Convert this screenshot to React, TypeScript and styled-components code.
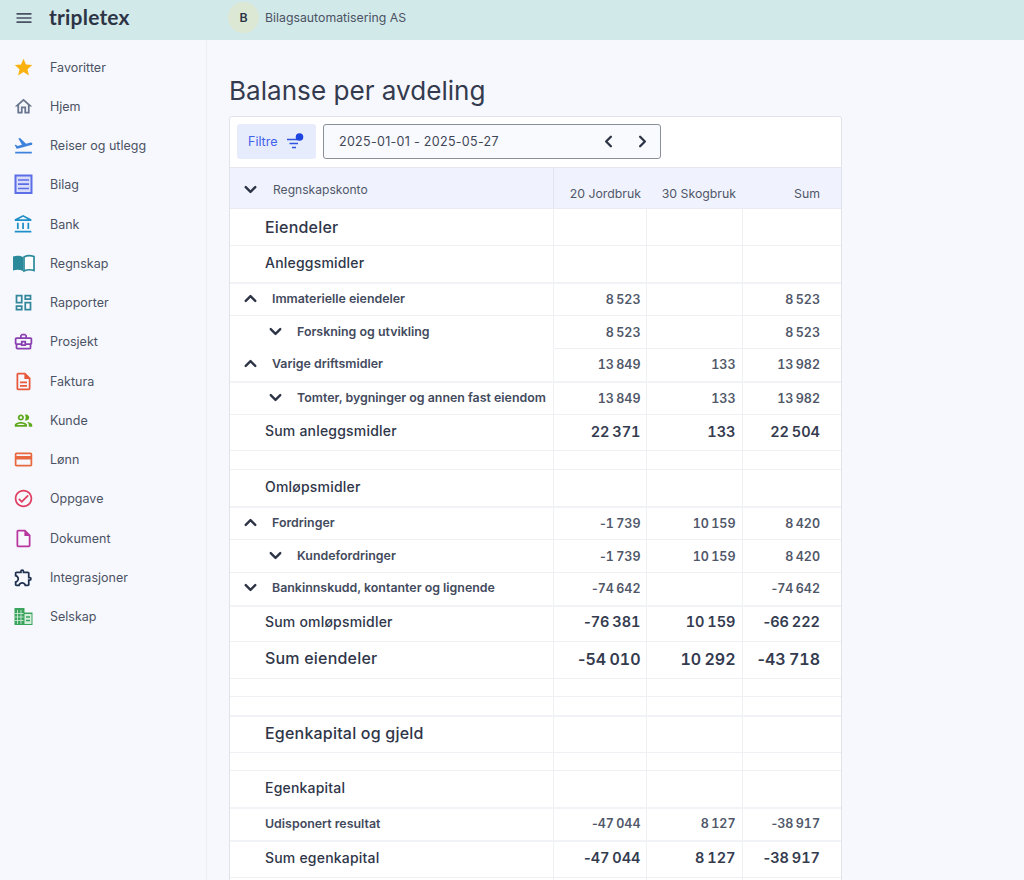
import React from 'react'
import styled, { createGlobalStyle } from 'styled-components'
import { ChevronDown, ChevronUp, ChevronLeft, ChevronRight } from 'lucide-react'
import {
  MdStar,
  MdOutlineHome,
  MdFlightTakeoff,
  MdOutlineAccountBalance,
  MdOutlineDashboard,
  MdOutlineBusinessCenter,
  MdOutlineDescription,
  MdOutlinePeople,
  MdOutlinePayment,
  MdOutlineCheckCircle,
  MdOutlineInsertDriveFile,
  MdOutlineExtension,
  MdMenu,
} from 'react-icons/md'

const GlobalStyle = createGlobalStyle`
  html, body {
    margin: 0;
    height: 880px;
    overflow: hidden;
    background: #f7f8fd;
    font-family: Inter, "Liberation Sans", sans-serif;
    color: #3b4256;
  }
  * { box-sizing: border-box; }
`

const TopBar = styled.header`
  height: 40px;
  background: #d2e9e9;
  display: flex;
  align-items: center;
`
const Burger = styled.div`
  width: 49px;
  padding-left: 14px;
  display: flex;
  color: #4a5162;
  font-size: 20px;
  margin-top: -5px;
`
const Logo = styled.div`
  width: 179px;
  font-family: Lato, sans-serif;
  font-weight: 700;
  font-size: 21px;
  letter-spacing: 0.2px;
  color: #2d3446;
  line-height: 32px;
  margin-top: -7px;
`
const Company = styled.div`
  display: flex;
  align-items: center;
  gap: 6px;
  font-size: 12.3px;
  color: #4b5264;
  margin-top: -5px;
`
const Avatar = styled.div`
  width: 31px;
  height: 31px;
  border-radius: 50%;
  background: #dce8d4;
  display: flex;
  align-items: center;
  justify-content: center;
  font-weight: 600;
  color: #2d3446;
`
const Body = styled.div`
  display: flex;
`
const Sidebar = styled.nav`
  width: 207px;
  height: 840px;
  flex: none;
  border-right: 1px solid #eceef4;
  padding-top: 7.5px;
`
const NavItem = styled.div`
  height: 39.25px;
  display: flex;
  align-items: center;
  font-size: 12.5px;
  color: #4b5264;
`
const NavIcon = styled.span<{ $color: string }>`
  width: 50px;
  padding-left: 13px;
  display: flex;
  font-size: 21px;
  color: ${({ $color }) => $color};
`
const Main = styled.main`
  padding: 33px 0 0 22px;
  width: 635px;
`
const Title = styled.h1`
  margin: 0 0 8px 0;
  font-size: 26.1px;
  line-height: 35px;
  font-weight: 400;
  color: #343b4f;
`
const Panel = styled.section`
  width: 613px;
  background: #fff;
  border: 1px solid #e1e3ea;
  border-radius: 3px 3px 0 0;
`
const Toolbar = styled.div`
  height: 50px;
  display: flex;
  align-items: flex-start;
  padding: 7px 7px 0;
  gap: 7px;
`
const FilterButton = styled.div`
  width: 79px;
  height: 35px;
  background: #e7ecfd;
  border-radius: 3px;
  color: #3f62e6;
  font-size: 12.5px;
  display: flex;
  align-items: center;
  padding-left: 11px;
  gap: 8px;
`
const DateField = styled.div`
  width: 338px;
  height: 35px;
  border: 1px solid #8a8f9c;
  border-radius: 3px;
  background: #f9fafd;
  font-size: 12.5px;
  letter-spacing: 0.3px;
  color: #3f4658;
  display: flex;
  align-items: center;
  padding: 0 8px 0 15px;
`
const DateText = styled.span`
  flex: 1;
`
const Arrows = styled.span`
  display: flex;
  gap: 15px;
  color: #2d3446;
`
const Table = styled.table`
  width: 100%;
  table-layout: fixed;
  border-collapse: collapse;
  border-top: 1px solid #e6e8ee;
`
const Head = styled.th`
  height: 41px;
  background: #f0f3fd;
  font-size: 12.3px;
  font-weight: 400;
  color: #505769;
  text-align: right;
  vertical-align: bottom;
  padding: 0 6px 7px 0;
  white-space: nowrap;
  border-bottom: 1px solid #e9ebf1;
  &:first-child {
    border-right: 1px solid #e3e6ef;
    padding: 3px 0 0;
    text-align: left;
    vertical-align: middle;
  }
  &:nth-child(2) { padding-right: 5px; }
  &:last-child { padding-right: 21px; }
`
const HeadLabel = styled.div`
  display: flex;
  align-items: center;
  font-size: 12.1px;
  padding-left: 11px;
`
const Toggle = styled.span<{ $w: number }>`
  width: ${({ $w }) => $w}px;
  display: flex;
  flex: none;
  color: #2d3446;
`
const Row = styled.tr<{ $h: number; $heavy?: boolean }>`
  height: ${({ $h }) => $h}px;
  border-bottom: ${({ $heavy }) => ($heavy ? '2px solid #f2f3f6' : '1px solid #eff0f4')};
`
const Label = styled.td<{ $level: number; $size: number; $pad: number; $open?: boolean; $sum?: boolean }>`
  font-size: ${({ $size }) => $size}px;
  font-weight: ${({ $sum }) => ($sum ? 500 : 600)};
  letter-spacing: ${({ $sum }) => ($sum ? 0.2 : 0)}px;
  color: ${({ $sum }) => ($sum ? '#2f3649' : '#434a5d')};
  padding: 0 0 ${({ $pad }) => $pad}px ${({ $level }) => $level}px;
  border-right: 1px solid #eff0f4;
  ${({ $open }) => ($open ? 'border-bottom: 1px solid #fff;' : '')}
  white-space: nowrap;
  overflow: hidden;
`
const LabelInner = styled.div`
  display: flex;
  align-items: center;
`
const Amount = styled.td<{ $size: number; $pad: number; $strong?: boolean }>`
  font-size: ${({ $size }) => $size}px;
  font-weight: 600;
  font-variant-numeric: tabular-nums;
  word-spacing: -1px;
  color: ${({ $strong }) => ($strong ? '#343b4f' : '#505769')};
  text-align: right;
  padding: 0 6px ${({ $pad }) => $pad}px 0;
  white-space: nowrap;
  border-right: 1px solid #eff0f4;
  &:nth-child(2) { padding-right: 5px; }
  &:last-child { border-right: 0; padding-right: 21px; }
`
const Minus = styled.span`
  font-variant-numeric: normal;
`

// drawn icons that the icon sets don't have
const BilagIcon = () => (
  <svg width="21" height="21" viewBox="0 0 21 21">
    <rect x="2.5" y="1.5" width="16" height="17.5" fill="#d9ddfa" stroke="#5b6ee6" strokeWidth="2" />
    <path d="M5 6h11M5 10.2h11M5 14.5h11" stroke="#5b6ee6" strokeWidth="1.7" />
  </svg>
)
const BookIcon = () => (
  <svg width="23" height="21" viewBox="0 0 23 21" style={{ marginLeft: -1 }}>
    <path d="M1 3.5c3-1.2 7-1.2 10 .4v14c-3-1.4-7-1.5-10-.5z" fill="#2a8a9a" />
    <path d="M12 3.9c3-1.6 7-1.6 10-.4v14c-3-1-7-.9-10 .5z" fill="#fff" stroke="#2a8a9a" strokeWidth="1.7" />
  </svg>
)
const SelskapIcon = () => (
  <svg width="21" height="21" viewBox="0 0 21 21">
    <path d="M1.5 2h10v4.5h8V19h-18z" fill="#3aa35c" />
    <path d="M4.5 4v14M8 4v14M2 7.5h8.5M2 11h8.5M2 14.5h8.5" stroke="#c9e8d3" strokeWidth="0.9" />
    <path d="M11.5 8h7v10h-7z" fill="#d5efdd" />
    <path d="M13 11h4M13 14.5h4" stroke="#3aa35c" strokeWidth="1.6" />
  </svg>
)
const FilterIcon = () => (
  <svg width="18" height="18" viewBox="0 0 18 18">
    <path d="M1 6.5h11M3.5 10.5h8.5M6 14.5h4" stroke="#2f55e0" strokeWidth="1.6" fill="none" />
    <circle cx="13.5" cy="4" r="3.8" fill="#1d45e0" />
  </svg>
)

const nav: { label: string; color: string; icon: React.ReactNode }[] = [
  { label: 'Favoritter', color: '#fbb10f', icon: <MdStar /> },
  { label: 'Hjem', color: '#68758c', icon: <MdOutlineHome /> },
  { label: 'Reiser og utlegg', color: '#3f82dc', icon: <MdFlightTakeoff /> },
  { label: 'Bilag', color: '#5b6ee6', icon: <BilagIcon /> },
  { label: 'Bank', color: '#1f8fc8', icon: <MdOutlineAccountBalance /> },
  { label: 'Regnskap', color: '#2a8a9a', icon: <BookIcon /> },
  { label: 'Rapporter', color: '#34879b', icon: <MdOutlineDashboard /> },
  { label: 'Prosjekt', color: '#8a3fb0', icon: <MdOutlineBusinessCenter /> },
  { label: 'Faktura', color: '#e8583a', icon: <MdOutlineDescription /> },
  { label: 'Kunde', color: '#5fa81e', icon: <MdOutlinePeople /> },
  { label: 'Lønn', color: '#e8683f', icon: <MdOutlinePayment /> },
  { label: 'Oppgave', color: '#df3f62', icon: <MdOutlineCheckCircle /> },
  { label: 'Dokument', color: '#b8379f', icon: <MdOutlineInsertDriveFile /> },
  { label: 'Integrasjoner', color: '#20304f', icon: <MdOutlineExtension /> },
  { label: 'Selskap', color: '#3aa35c', icon: <SelskapIcon /> },
]

type Line = {
  label?: string
  h: number
  size?: number
  level?: number
  toggle?: 'up' | 'down'
  values?: string[]
  numSize?: number
  pad?: number
  numPad?: number
  heavy?: boolean
  open?: boolean
  sum?: boolean
}

const sub = 12.4
const rows: Line[] = [
  { label: 'Eiendeler', h: 37, size: 16, level: 35, pad: 1, sum: true },
  { label: 'Anleggsmidler', h: 37, size: 14, level: 35, pad: 2, sum: true, heavy: true },
  { label: 'Immaterielle eiendeler', h: 33, size: sub, level: 11, toggle: 'up', pad: 2, values: ['8 523', '', '8 523'] },
  { label: 'Forskning og utvikling', h: 33, size: sub, level: 36, toggle: 'down', pad: 2, open: true, values: ['8 523', '', '8 523'] },
  { label: 'Varige driftsmidler', h: 33, size: sub, level: 11, toggle: 'up', pad: 2, heavy: true, values: ['13 849', '133', '13 982'] },
  { label: 'Tomter, bygninger og annen fast eiendom', h: 33, size: sub, level: 36, toggle: 'down', pad: 2, values: ['13 849', '133', '13 982'] },
  { label: 'Sum anleggsmidler', h: 36, size: 14, level: 35, pad: 4, sum: true, values: ['22 371', '133', '22 504'], numSize: 14.5, numPad: 2 },
  { h: 19 },
  { label: 'Omløpsmidler', h: 37, size: 14, level: 35, pad: 2, sum: true, heavy: true },
  { label: 'Fordringer', h: 33, size: sub, level: 11, toggle: 'up', pad: 2, values: ['-1 739', '10 159', '8 420'] },
  { label: 'Kundefordringer', h: 33, size: sub, level: 36, toggle: 'down', pad: 2, values: ['-1 739', '10 159', '8 420'] },
  { label: 'Bankinnskudd, kontanter og lignende', h: 33, size: sub, level: 11, toggle: 'down', pad: 2, open: true, heavy: true, values: ['-74 642', '', '-74 642'] },
  { label: 'Sum omløpsmidler', h: 36, size: 14, level: 35, pad: 4, sum: true, values: ['-76 381', '10 159', '-66 222'], numSize: 14.5, numPad: 4 },
  { label: 'Sum eiendeler', h: 37, size: 16, level: 35, pad: 4, sum: true, values: ['-54 010', '10 292', '-43 718'], numSize: 16, numPad: 2 },
  { h: 18 },
  { h: 19, heavy: true },
  { label: 'Egenkapital og gjeld', h: 37, size: 16, level: 35, pad: 2, sum: true },
  { h: 18 },
  { label: 'Egenkapital', h: 37, size: 14, level: 35, pad: 2, sum: true, heavy: true },
  { label: 'Udisponert resultat', h: 33, size: sub, level: 35, pad: 2, heavy: true, values: ['-47 044', '8 127', '-38 917'], numPad: 2 },
  { label: 'Sum egenkapital', h: 37, size: 14, level: 35, pad: 4, sum: true, values: ['-47 044', '8 127', '-38 917'], numSize: 14.5, numPad: 4 },
  { h: 30 },
]

const renderValue = (value?: string) =>
  value?.startsWith('-') ? (
    <>
      <Minus>-</Minus>
      {value.slice(1)}
    </>
  ) : (
    value
  )

export default function App() {
  return (
    <>
      <GlobalStyle />
      <TopBar>
        <Burger><MdMenu /></Burger>
        <Logo>tripletex</Logo>
        <Company>
          <Avatar>B</Avatar>
          Bilagsautomatisering AS
        </Company>
      </TopBar>
      <Body>
        <Sidebar>
          {nav.map((item) => (
            <NavItem key={item.label}>
              <NavIcon $color={item.color}>{item.icon}</NavIcon>
              {item.label}
            </NavItem>
          ))}
        </Sidebar>
        <Main>
          <Title>Balanse per avdeling</Title>
          <Panel>
            <Toolbar>
              <FilterButton>Filtre <FilterIcon /></FilterButton>
              <DateField>
                <DateText>2025-01-01 - 2025-05-27</DateText>
                <Arrows>
                  <ChevronLeft size={19} strokeWidth={3} />
                  <ChevronRight size={19} strokeWidth={3} />
                </Arrows>
              </DateField>
            </Toolbar>
            <Table>
              <colgroup>
                <col style={{ width: 323 }} />
                <col style={{ width: 93 }} />
                <col style={{ width: 96 }} />
                <col />
              </colgroup>
              <thead>
                <tr>
                  <Head>
                    <HeadLabel>
                      <Toggle $w={32}><ChevronDown size={19} strokeWidth={3} /></Toggle>
                      Regnskapskonto
                    </HeadLabel>
                  </Head>
                  <Head>20 Jordbruk</Head>
                  <Head>30 Skogbruk</Head>
                  <Head>Sum</Head>
                </tr>
              </thead>
              <tbody>
                {rows.map((row, i) => (
                  <Row key={i} $h={row.h} $heavy={row.heavy}>
                    <Label
                      $level={row.level ?? 0}
                      $size={row.size ?? sub}
                      $pad={row.pad ?? 0}
                      $open={row.open}
                      $sum={row.sum}
                    >
                      <LabelInner>
                        {row.toggle && (
                          <Toggle $w={31}>
                            {row.toggle === 'up' ? (
                              <ChevronUp size={19} strokeWidth={3} />
                            ) : (
                              <ChevronDown size={19} strokeWidth={3} />
                            )}
                          </Toggle>
                        )}
                        {row.label}
                      </LabelInner>
                    </Label>
                    {[0, 1, 2].map((c) => (
                      <Amount key={c} $size={row.numSize ?? 12.5} $pad={row.numPad ?? 0} $strong={row.sum}>
                        {renderValue(row.values?.[c])}
                      </Amount>
                    ))}
                  </Row>
                ))}
              </tbody>
            </Table>
          </Panel>
        </Main>
      </Body>
    </>
  )
}
